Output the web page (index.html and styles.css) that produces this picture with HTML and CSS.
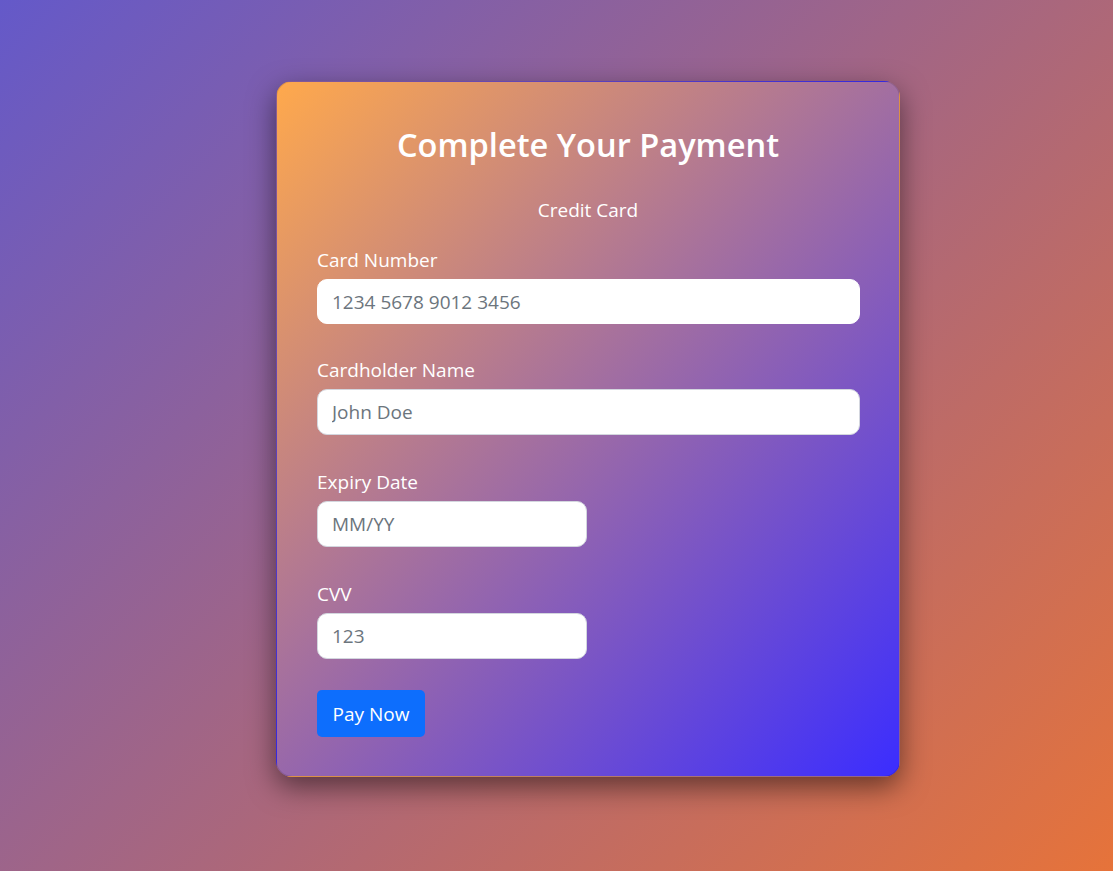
FILE: index.html
```html
<!DOCTYPE html>
<html lang="en">
<head>
<meta charset="utf-8">
<title>Complete Your Payment</title>
<link rel="stylesheet" href="styles.css">
</head>
<body>
<main class="page">
  <section class="card">
    <h2 class="title">Complete Your Payment</h2>
    <p class="method">Credit Card</p>
    <form class="form">
      <div class="group group-tight">
        <label class="label" for="num">Card Number</label>
        <input class="input input-first" id="num" type="text" placeholder="1234 5678 9012 3456">
      </div>
      <div class="group">
        <label class="label" for="name">Cardholder Name</label>
        <input class="input" id="name" type="text" placeholder="John Doe">
      </div>
      <div class="group">
        <label class="label" for="exp">Expiry Date</label>
        <input class="input input-half" id="exp" type="text" placeholder="MM/YY">
      </div>
      <div class="group group-tight">
        <label class="label" for="cvv">CVV</label>
        <input class="input input-half" id="cvv" type="text" placeholder="123">
      </div>
      <button class="btn" type="button">Pay Now</button>
    </form>
  </section>
</main>
</body>
</html>
```
FILE: styles.css
```css
* { box-sizing: border-box; }
html, body { margin: 0; padding: 0; }
body {
  min-height: 871px;
  background: linear-gradient(135deg, #6459c9 0%, #e6733a 100%);
  font-family: "Open Sans", "Noto Sans", sans-serif;
  color: #fff;
}
.page {
  display: flex;
  padding: 81px 0 94px 276px;
}
.card {
  width: 624px;
  height: 696px;
  padding: 40px 40px;
  border: 1px solid rgba(0, 0, 0, 0.12);
  border-radius: 16px;
  background: linear-gradient(135deg, #ffa94c 0%, #3b2dff 100%);
  box-shadow: 0 10px 28px rgba(0, 0, 0, 0.5);
  display: flex;
  flex-direction: column;
}
.title {
  margin: 0;
  font-size: 32.6px;
  font-weight: 600;
  line-height: 45px;
  text-align: center;
}
.method {
  margin: 28px 0 0;
  font-size: 19px;
  line-height: 30px;
  text-align: center;
}
.form {
  display: flex;
  flex-direction: column;
  margin-top: 20px;
}
.group {
  display: flex;
  flex-direction: column;
  align-items: flex-start;
  margin-bottom: 32px;
}
.group-tight { margin-bottom: 31px; }
.label {
  font-size: 19px;
  line-height: 30px;
  margin-bottom: 4px;
}
.input {
  width: 543px;
  height: 46px;
  padding: 0 14px;
  border: 1px solid #d3d6de;
  border-radius: 10px;
  background: #fff;
  font-family: inherit;
  font-size: 19px;
  color: #212529;
  outline: none;
}
.input-first { height: 45px; border-color: #fff; }
.input-half { width: 270px; }
.input::placeholder { color: #6c757d; opacity: 1; }
.btn {
  align-self: flex-start;
  width: 108px;
  height: 47px;
  padding: 0;
  border: none;
  border-radius: 5px;
  background: #0d6efd;
  color: #fff;
  font-family: inherit;
  font-size: 19px;
  cursor: pointer;
}
```
